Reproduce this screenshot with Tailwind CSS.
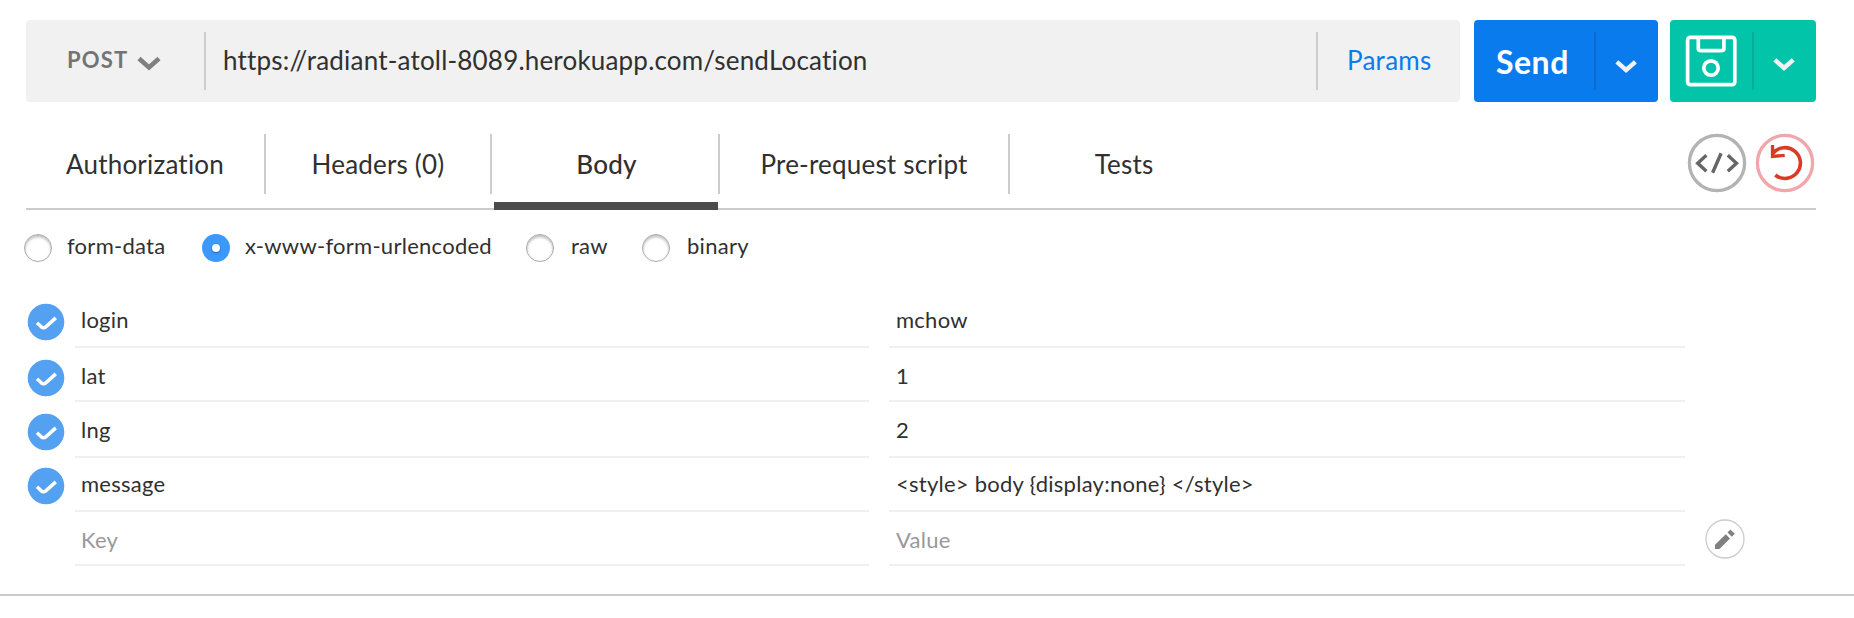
<!DOCTYPE html>
<html lang="en"><head><meta charset="utf-8"><title>Request</title>
<script src="https://cdn.jsdelivr.net/npm/@tailwindcss/browser@4"></script></head>
<body class="bg-white text-[#303030] font-['Lato','Open_Sans',sans-serif]">
<main class="w-[1854px] h-[618px] overflow-hidden">
<header class="flex pl-[26px] pt-5 h-[102px]">
  <div class="flex w-[1434px] h-[82px] bg-[#f1f1f1] rounded py-3 mr-[14px]">
    <div class="flex w-[178px] pl-[41px] leading-[55px] text-[22px] font-bold text-[#747474] tracking-[1.2px]"><span class="w-[70px]">POST</span>
      <svg class="mt-[23px]" width="24" height="17" fill="none" stroke="#808080" stroke-width="4.6"><path d="M2 3.5 12 12.5 22 3.5"/></svg></div>
    <div class="flex-1 border-l-2 border-r-2 border-[#ccc] pl-[17px] leading-[57px] text-[26px] tracking-[0.19px]"><span>https://radiant-atoll-8089.herokuapp.com/sendLocation</span></div>
    <a class="w-[142px] pl-[29px] leading-[57px] text-[26px] text-[#097bed] tracking-[0.25px]"><span>Params</span></a>
  </div>
  <div class="flex w-[184px] h-[82px] bg-[#097bed] rounded py-3 mr-3 text-white">
    <div class="w-[120px] pl-[22px] leading-[60px] text-[32px] font-bold tracking-[0.5px]"><span>Send</span></div>
    <div class="flex-1 border-l-2 border-[#0a6bd0] pl-[18px] pt-[27px]"><svg width="24" height="17" fill="none" stroke="#f1f1f1" stroke-width="4.4"><path d="M2.8 2.8 12.1 11 21.4 2.8"/></svg></div>
  </div>
  <div class="flex w-[146px] h-[82px] bg-[#02c4a8] rounded py-3">
    <div class="w-[82px] pl-[15px] pt-[3px]"><svg width="53" height="53" fill="none" stroke="#fff" stroke-width="3.7"><rect x="2.6" y="2.4" width="47.2" height="47.2" rx="2.6"/><path d="M13.3 2.4v11.2q0 2 2 2h21.6q2 0 2-2V2.4"/><circle cx="26" cy="33" r="7.2"/></svg></div>
    <div class="flex-1 border-l-2 border-[#04ad95] pl-[18px] pt-[25px]"><svg width="24" height="17" fill="none" stroke="#f1f1f1" stroke-width="4.4"><path d="M2.8 2.8 12 11 21.3 2.8"/></svg></div>
  </div>
</header>
<nav class="flex ml-[26px] w-[1790px] h-[108px] pt-8 border-b-2 border-[#ccc] text-[26px] leading-[61px] text-center tracking-[0.2px]">
  <div class="w-[240px] h-[60px] border-r-2 border-[#ccc]"><span>Authorization</span></div>
  <div class="w-[226px] h-[60px] border-r-2 border-[#ccc]"><span>Headers (0)</span></div>
  <div class="relative w-[228px] h-[60px] border-r-2 border-[#ccc] pl-[3px] font-medium"><span>Body</span><i class="absolute left-[2px] top-[68px] w-[224px] h-2 bg-[#4c4c4c]"></i></div>
  <div class="w-[290px] h-[60px] border-r-2 border-[#ccc]"><span>Pre-request script</span></div>
  <div class="w-[228px] h-[60px]"><span>Tests</span></div>
  <div class="flex gap-2 ml-auto mr-[1px] -mt-[1px]">
    <svg width="60" height="60" fill="none"><circle cx="30" cy="30" r="27.6" stroke="#b3b3b3" stroke-width="3.3"/><path d="M19.4 22.2 10.7 30.2 19.4 38.3M40.8 22.2l8.7 8L40.8 38.3M34.1 20.3 25.6 39.7" stroke="#666" stroke-width="3.4"/></svg>
    <svg width="60" height="60" fill="none"><circle cx="30" cy="30" r="27.6" stroke="#f0a6aa" stroke-width="3.3"/><path d="M18 20.4A15.4 15.4 0 1 1 20.3 42" stroke="#db3b26" stroke-width="3.6"/><path d="M17.5 12v11.5l12.2-1.2" stroke="#db3b26" stroke-width="3.3"/></svg>
  </div>
</nav>
<section class="flex h-[82px] pt-6 pl-6 text-[22px] leading-[23px] tracking-[0.27px]">
  <label class="flex w-[178px]"><i class="size-7 rounded-full border border-[#aaa] shadow-[inset_0_2px_3px_#bbb] mr-[15px]"></i><span>form-data</span></label>
  <label class="flex w-[324px]"><i class="flex items-center justify-center size-7 rounded-full bg-[#3b99fc] mr-[15px]"><b class="size-2 rounded-full bg-white shadow-[0_1px_2px_#1567bd]"></b></i><span>x-www-form-urlencoded</span></label>
  <label class="flex w-[116px]"><i class="size-7 rounded-full border border-[#aaa] shadow-[inset_0_2px_3px_#bbb] mr-[17px]"></i><span>raw</span></label>
  <label class="flex"><i class="size-7 rounded-full border border-[#aaa] shadow-[inset_0_2px_3px_#bbb] mr-[17px]"></i><span>binary</span></label>
</section>
<section class="text-[22px] leading-[55px] tracking-[0.25px]">
  <div class="flex h-14 pl-[27px]"><svg class="mt-[11px] mr-[10px]" width="38" height="38"><circle cx="19" cy="19" r="18.3" fill="#54a1f2"/><path d="M10 19.8l4.2 4q2.3 1.9 4.6 0L28.8 14.9" fill="none" stroke="#fff" stroke-width="3.5"/></svg><div class="w-[794px] border-b-2 border-[#f0f0f0] pl-[6px] mr-5"><span>login</span></div><div class="w-[796px] border-b-2 border-[#f0f0f0] pl-[7px]"><span>mchow</span></div></div>
  <div class="flex h-[54px] pl-[27px]"><svg class="mt-[11px] mr-[10px]" width="38" height="38"><circle cx="19" cy="19" r="18.3" fill="#54a1f2"/><path d="M10 19.8l4.2 4q2.3 1.9 4.6 0L28.8 14.9" fill="none" stroke="#fff" stroke-width="3.5"/></svg><div class="w-[794px] border-b-2 border-[#f0f0f0] pl-[6px] mr-5"><span>lat</span></div><div class="w-[796px] border-b-2 border-[#f0f0f0] pl-[7px]"><span>1</span></div></div>
  <div class="flex h-14 pl-[27px]"><svg class="mt-[11px] mr-[10px]" width="38" height="38"><circle cx="19" cy="19" r="18.3" fill="#54a1f2"/><path d="M10 19.8l4.2 4q2.3 1.9 4.6 0L28.8 14.9" fill="none" stroke="#fff" stroke-width="3.5"/></svg><div class="w-[794px] border-b-2 border-[#f0f0f0] pl-[6px] mr-5"><span>lng</span></div><div class="w-[796px] border-b-2 border-[#f0f0f0] pl-[7px]"><span>2</span></div></div>
  <div class="flex h-[54px] pl-[27px] leading-[51px]"><svg class="mt-[9px] mr-[10px]" width="38" height="38"><circle cx="19" cy="19" r="18.3" fill="#54a1f2"/><path d="M10 19.8l4.2 4q2.3 1.9 4.6 0L28.8 14.9" fill="none" stroke="#fff" stroke-width="3.5"/></svg><div class="w-[794px] border-b-2 border-[#f0f0f0] pl-[6px] mr-5"><span>message</span></div><div class="w-[796px] border-b-2 border-[#f0f0f0] pl-[7px]"><span>&lt;style&gt; body {display:none} &lt;/style&gt;</span></div></div>
  <div class="flex h-[54px] pl-[75px] text-[#999]"><div class="w-[794px] border-b-2 border-[#f0f0f0] pl-[6px] mr-5"><span>Key</span></div><div class="w-[796px] border-b-2 border-[#f0f0f0] pl-[7px]"><span>Value</span></div>
    <svg class="ml-5 mt-[7px]" width="40" height="40"><circle cx="20" cy="20" r="19" fill="none" stroke="#ccc" stroke-width="1.3"/><path d="M10 30v-4.2L20.8 15.2l4.2 4.2L14.5 30zM22.5 13.5l2.8-3 4.5 4.2-3 3z" fill="#808080"/></svg></div>
</section>
<footer class="mt-7 border-t-2 border-[#ccc]"></footer>
</main>
</body></html>
